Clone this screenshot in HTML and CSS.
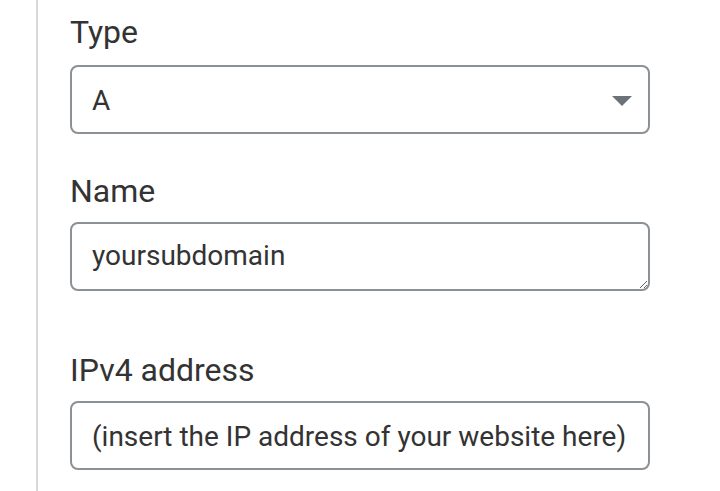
FILE: index.html
```html
<!DOCTYPE html>
<html lang="en">
<head>
<meta charset="utf-8">
<title>DNS record</title>
<link rel="stylesheet" href="styles.css">
</head>
<body>
<div class="panel">
  <div class="group group-type">
    <label class="label" for="type">Type</label>
    <div class="select-wrap">
      <select id="type" class="field select">
        <option>A</option>
      </select>
      <svg class="caret" width="20" height="10" viewBox="0 0 20 10"><path d="M0 0h20L10 10z" fill="#6c7278"/></svg>
    </div>
  </div>
  <div class="group group-name">
    <label class="label" for="name">Name</label>
    <textarea id="name" class="field area" rows="1">yoursubdomain</textarea>
  </div>
  <div class="group group-ip">
    <label class="label" for="ip">IPv4 address</label>
    <input id="ip" class="field input" type="text" value="(insert the IP address of your website here)">
  </div>
</div>
</body>
</html>
```

FILE: styles.css
```css
html, body {
  margin: 0;
  padding: 0;
  background: #ffffff;
}
body {
  font-family: Roboto, "Liberation Sans", sans-serif;
  color: #333333;
  height: 491px;
  overflow: hidden;
}
.panel {
  margin-left: 36px;
  width: 644px;
  min-height: 491px;
  border-left: 2px solid #d9d9d9;
  border-right: 2px solid #d9d9d9;
  padding: 13px 32px 0 32px;
  box-sizing: content-box;
}
.group {
  display: flex;
  flex-direction: column;
}
.label {
  display: block;
  font-size: 32px;
  line-height: 38px;
  margin-bottom: 14px;
  color: #333333;
}
.field {
  display: block;
  width: 580px;
  height: 69px;
  box-sizing: border-box;
  border: 2px solid #8c9196;
  border-radius: 8px;
  background: #ffffff;
  font-family: Roboto, "Liberation Sans", sans-serif;
  font-size: 28px;
  color: #333333;
  padding: 0 20px;
  margin: 0;
  outline: none;
}
.select-wrap {
  position: relative;
  width: 580px;
}
.select {
  appearance: none;
  -webkit-appearance: none;
  padding-top: 1px;
}
.caret {
  position: absolute;
  right: 18px;
  top: 31px;
  pointer-events: none;
}
.group-name {
  margin-top: 38px;
}
.group-name .label {
  margin-bottom: 12px;
}
.area {
  resize: vertical;
  padding-top: 15px;
  line-height: 33px;
  overflow: hidden;
}
.group-ip {
  margin-top: 60px;
}
.group-ip .label {
  margin-bottom: 12px;
}
.input {
  padding-top: 2px;
}
```
